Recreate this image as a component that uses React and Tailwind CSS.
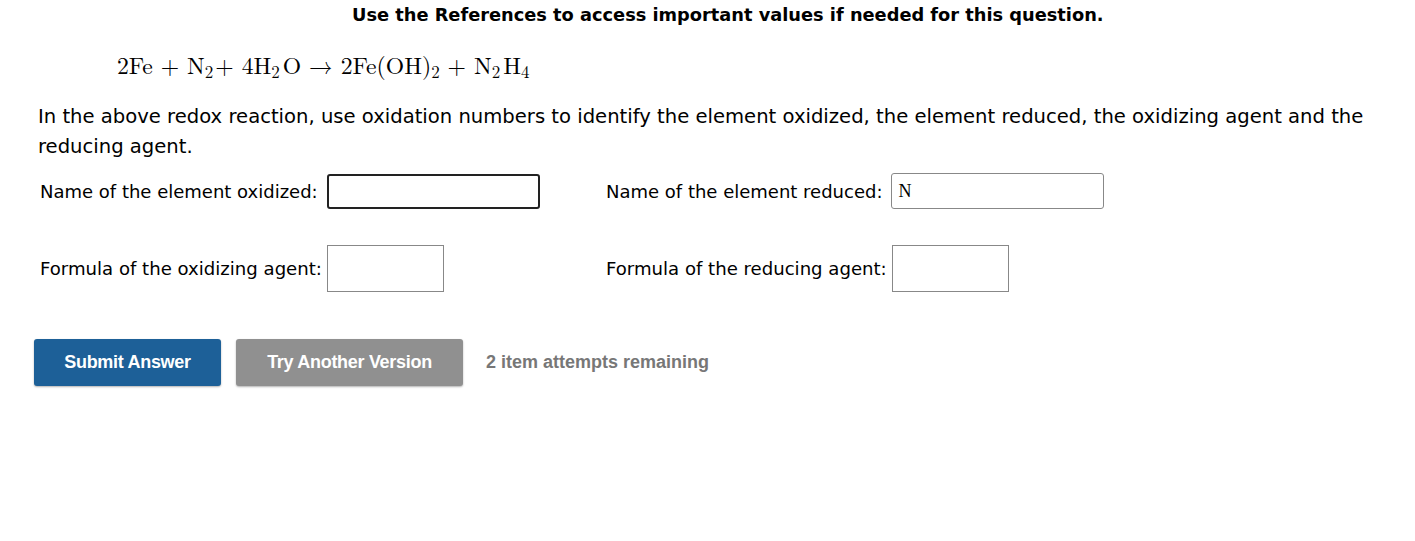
export default function App() {
  return (
    <div className="min-h-screen bg-white text-black" style={{ fontFamily: "Verdana, 'DejaVu Sans', sans-serif" }}>
      <div className="pl-[352px] pt-[4px] h-[30px]">
        <p className="text-[17.8px] font-bold leading-[22px] whitespace-nowrap">
          Use the References to access important values if needed for this question.
        </p>
      </div>

      <div className="pl-[117px] pt-[19px] h-[48px] text-[23.7px] leading-[30px] whitespace-nowrap" style={{ fontFamily: "'Latin Modern Roman', 'Liberation Serif', 'DejaVu Serif', serif" }}>
        2Fe + N<span className="relative top-[4px] text-[17px] mr-[2px]">2</span>+ 4H<span className="relative top-[4px] text-[17px] mr-[3px]">2</span>O → 2Fe(OH)<span className="relative top-[4px] text-[17px]">2</span> + N<span className="relative top-[4px] text-[17px] mr-[3px]">2</span>H<span className="relative top-[4px] text-[17px]">4</span>
      </div>

      <p className="pl-[38px] pr-[30px] pt-[24px] text-[19.6px] leading-[30px]">
        In the above redox reaction, use oxidation numbers to identify the element oxidized, the element reduced, the oxidizing agent and the reducing agent.
      </p>

      <div className="pl-[40px] pt-[11px] flex items-center">
        <div className="w-[566px] flex items-center">
          <span className="text-[18px] whitespace-nowrap">Name of the element oxidized:</span>
          <div className="ml-[9px] w-[213px] h-[35px] border-2 border-[#222] rounded-[3px]"></div>
        </div>
        <div className="flex items-center">
          <span className="text-[18px] whitespace-nowrap">Name of the element reduced:</span>
          <div className="ml-[9px] w-[213px] h-[36px] border border-[#888] rounded-[3px] flex items-center pl-[6px] text-[18px]" style={{ fontFamily: "'Liberation Serif', serif" }}>
            N
          </div>
        </div>
      </div>

      <div className="pl-[40px] pt-[36px] flex items-center">
        <div className="w-[566px] flex items-center">
          <span className="text-[18.1px] whitespace-nowrap">Formula of the oxidizing agent:</span>
          <div className="ml-[5px] w-[117px] h-[47px] border border-[#888]"></div>
        </div>
        <div className="flex items-center">
          <span className="text-[18.1px] whitespace-nowrap">Formula of the reducing agent:</span>
          <div className="ml-[5px] w-[117px] h-[47px] border border-[#888]"></div>
        </div>
      </div>

      <div className="pl-[34px] pt-[47px] flex items-center" style={{ fontFamily: "Arial, 'Liberation Sans', sans-serif" }}>
        <button className="w-[187px] h-[47px] bg-[#1d6098] text-white font-bold text-[18px] tracking-[-0.3px] rounded-[3px] shadow-[0_1px_2px_rgba(0,0,0,0.3)]">
          Submit Answer
        </button>
        <button className="ml-[15px] w-[227px] h-[47px] bg-[#909090] text-white font-bold text-[18px] tracking-[-0.3px] rounded-[3px] shadow-[0_1px_2px_rgba(0,0,0,0.3)]">
          Try Another Version
        </button>
        <span className="ml-[23px] text-[18px] font-bold text-[#777]">2 item attempts remaining</span>
      </div>
    </div>
  );
}
